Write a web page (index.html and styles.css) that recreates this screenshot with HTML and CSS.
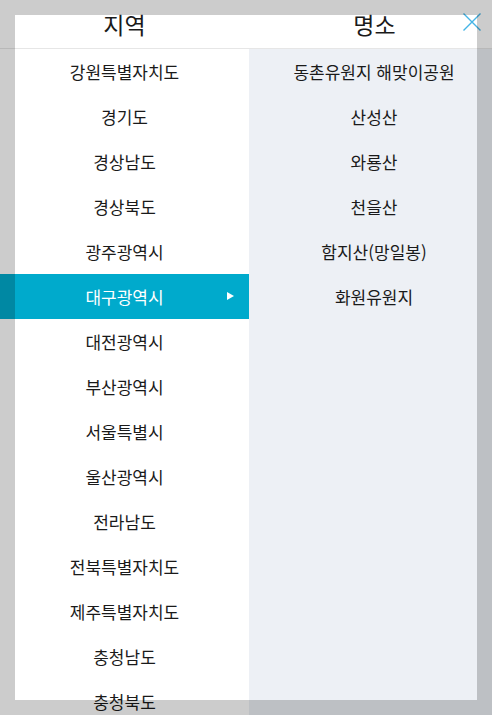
FILE: index.html
```html
<!DOCTYPE html>
<html lang="ko">
<head>
<meta charset="utf-8">
<title>지역 / 명소</title>
<link rel="stylesheet" href="styles.css">
</head>
<body>
<div class="page">
  <header class="head">
    <div class="head-cell">지역</div>
    <div class="head-cell head-right">명소</div>
    <button class="close" aria-label="닫기">
      <svg width="18" height="18" viewBox="0 0 18 18"><path d="M0.5 0.5 L17.5 17.5 M17.5 0.5 L0.5 17.5" stroke="#45b4e6" stroke-width="1.4" fill="none"/></svg>
    </button>
  </header>
  <div class="cols">
    <ul class="list regions">
      <li class="item">강원특별자치도</li>
      <li class="item">경기도</li>
      <li class="item">경상남도</li>
      <li class="item">경상북도</li>
      <li class="item">광주광역시</li>
      <li class="item active">대구광역시<span class="arrow"></span></li>
      <li class="item">대전광역시</li>
      <li class="item">부산광역시</li>
      <li class="item">서울특별시</li>
      <li class="item">울산광역시</li>
      <li class="item">전라남도</li>
      <li class="item">전북특별자치도</li>
      <li class="item">제주특별자치도</li>
      <li class="item">충청남도</li>
      <li class="item">충청북도</li>
    </ul>
    <ul class="list places">
      <li class="item">동촌유원지 해맞이공원</li>
      <li class="item">산성산</li>
      <li class="item">와룡산</li>
      <li class="item">천을산</li>
      <li class="item">함지산(망일봉)</li>
      <li class="item">화원유원지</li>
    </ul>
  </div>
</div>
<div class="frame"></div>
</body>
</html>
```

FILE: styles.css
```css
html, body {
  margin: 0;
  height: 100%;
  overflow: hidden;
}
body {
  font-family: "Noto Sans CJK KR", "Noto Sans", sans-serif;
  color: #1a1a1a;
  background: #fff;
}
.page {
  display: flex;
  flex-direction: column;
  height: 100vh;
}
.head {
  position: relative;
  display: grid;
  grid-template-columns: 249px 1fr;
  height: 48px;
  border-bottom: 1px solid #e6e6e6;
  flex: none;
}
.head-cell {
  display: flex;
  align-items: center;
  justify-content: center;
  font-size: 23px;
  line-height: 1;
}
.head-right {
  padding-left: 8px;
}
.close {
  position: absolute;
  top: 13px;
  left: 463px;
  width: 18px;
  height: 18px;
  padding: 0;
  margin: 0;
  border: 0;
  background: none;
  display: block;
}
.close svg {
  display: block;
}
.cols {
  flex: 1;
  display: grid;
  grid-template-columns: 249px 1fr;
  min-height: 0;
}
.list {
  list-style: none;
  margin: 0;
  padding: 0;
}
.places {
  background: #edf0f5;
  padding-left: 7px;
}
.item {
  position: relative;
  height: 45px;
  line-height: 45px;
  text-align: center;
  font-size: 17px;
}
.item.active {
  background: #00aacc;
  color: #fff;
}
.arrow {
  position: absolute;
  right: 15px;
  top: 18px;
  width: 0;
  height: 0;
  border-left: 7px solid #fff;
  border-top: 4px solid transparent;
  border-bottom: 4px solid transparent;
}
.frame {
  position: fixed;
  inset: 0;
  border: 15px solid rgba(0, 0, 0, 0.2);
  pointer-events: none;
}
```
